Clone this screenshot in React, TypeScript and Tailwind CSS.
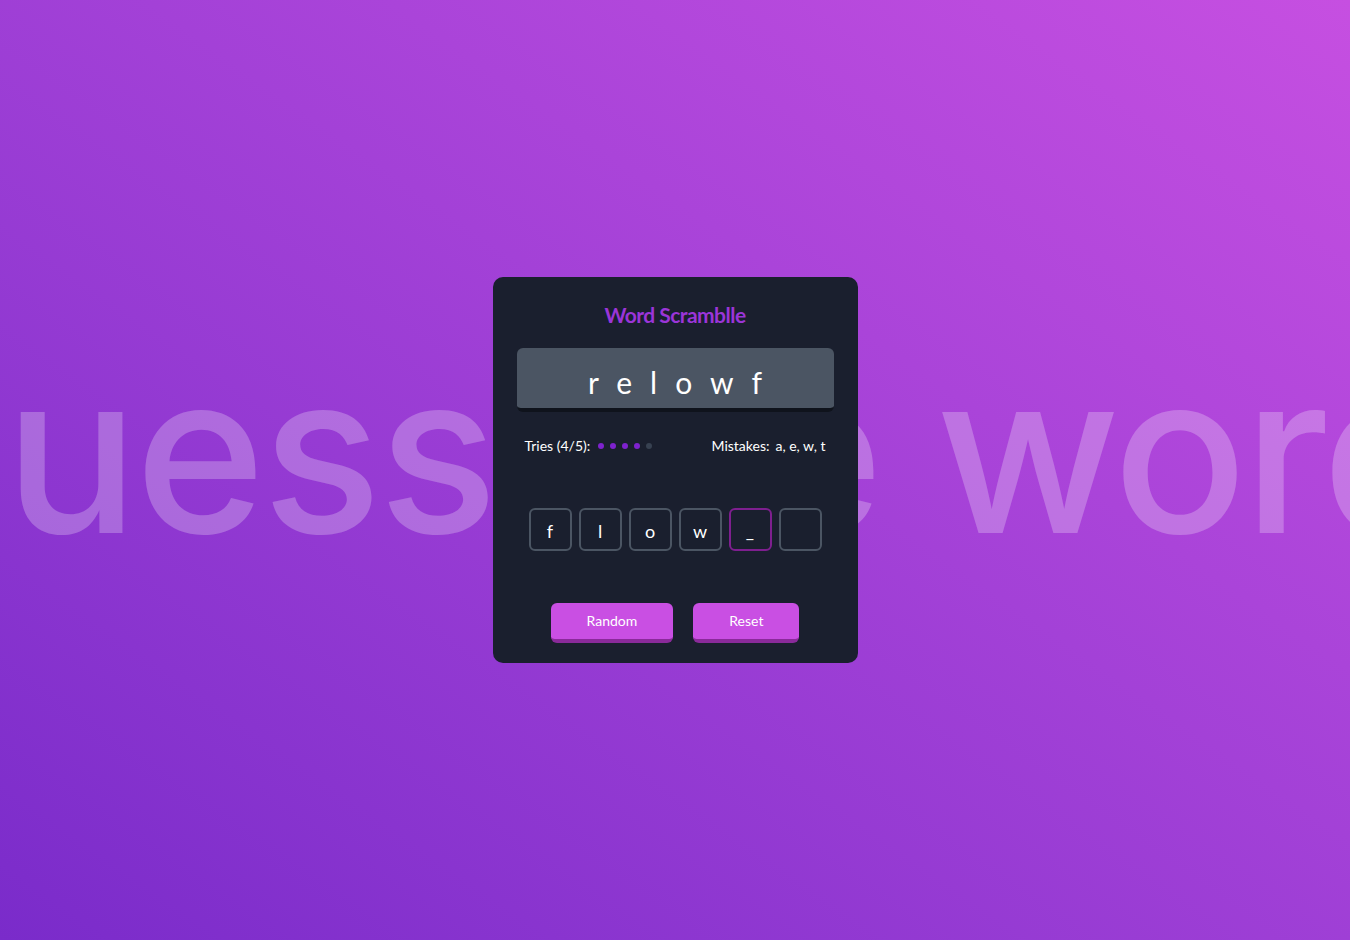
const guess = ["f", "l", "o", "w", "_", ""];

export default function App() {
  return (
    <main
      className="relative h-[940px] w-full overflow-hidden bg-linear-to-tr from-[#7a2bca] to-[#c64fe1] flex items-center justify-center"
      style={{ fontFamily: "Lato, 'Noto Sans', sans-serif" }}
    >
      {/* Background words */}
      <div className="absolute inset-0 flex items-center justify-center pointer-events-none select-none">
        <span
          className="whitespace-nowrap text-[222px] font-medium leading-none tracking-[-0.015em] text-white/25 -mt-[34px] -translate-x-[26px]"
          style={{ fontFamily: "Inter, sans-serif" }}
        >
          Guess the word
        </span>
      </div>

      {/* Card */}
      <section className="relative w-[365px] rounded-[10px] bg-[#1a1f2e] px-6 pt-6 pb-5">
        <h1 className="text-center text-[21px] leading-[27px] font-bold text-[#9b35d8] tracking-tight">
          Word Scramblle
        </h1>

        <div className="mt-5 flex h-[64px] items-center justify-center rounded-md border-b-4 border-[#0f131c] bg-[#4b5563] pt-2 pl-[18px] text-[30px] leading-none tracking-[18px] text-white">
          relowf
        </div>

        <div className="mt-6 flex items-center justify-between px-2 text-sm text-white">
          <div className="flex items-center">
            <span>Tries (4/5):</span>
            <div className="ml-2 flex gap-1.5">
              {[0, 1, 2, 3, 4].map((i) => (
                <span
                  key={i}
                  className={`h-1.5 w-1.5 rounded-full ${i < 4 ? "bg-[#7e22ce]" : "bg-[#374151]"}`}
                />
              ))}
            </div>
          </div>
          <div>
            Mistakes:<span className="ml-1.5">a, e, w, t</span>
          </div>
        </div>

        <div className="mt-[52px] flex justify-center gap-[7px]">
          {guess.map((l, i) => (
            <div
              key={i}
              className={`flex h-[43px] w-[43px] items-center justify-center rounded-md border-2 pt-0.5 text-lg text-white ${
                i === 4 ? "border-[#7e1f8f]" : "border-[#4b5563]"
              }`}
            >
              {l}
            </div>
          ))}
        </div>

        <div className="mt-[52px] flex justify-center gap-5">
          <button className="rounded-md border-b-4 border-[#8a2a9a] bg-[#c94fe3] px-9 py-2 text-sm text-white">
            Random
          </button>
          <button className="rounded-md border-b-4 border-[#8a2a9a] bg-[#c94fe3] px-9 py-2 text-sm text-white">
            Reset
          </button>
        </div>
      </section>
    </main>
  );
}
